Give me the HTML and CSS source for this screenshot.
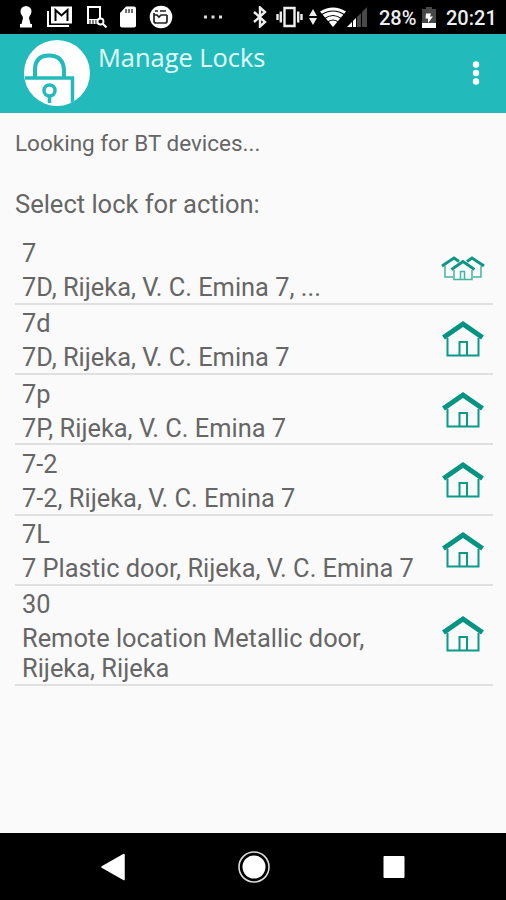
FILE: index.html
```html
<!DOCTYPE html>
<html lang="en">
<head>
<meta charset="utf-8">
<title>Manage Locks</title>
<link rel="stylesheet" href="styles.css">
</head>
<body>
<svg class="defs" width="0" height="0">
  <symbol id="house" viewBox="0 0 44 38">
    <path d="M6.500 18v17.500h31V18M18.500 35V22h7.500v13" fill="none" stroke="#0a9a88" stroke-width="2"/>
    <path d="M2.500 17.500 22 4l19.500 13.500" fill="none" stroke="#059482" stroke-width="5"/>
  </symbol>
  <symbol id="houses" viewBox="0 0 44 28">
    <g fill="none" stroke="#45b5a3" stroke-width="1.500">
      <path d="M4 11v11h8M40 11v11h-8M13 15v9.500h18V15M19.500 24v-7.500h4V24"/>
    </g>
    <g fill="none" stroke="#0c9684" stroke-width="2.800">
      <path d="m1 11 12-8 5 3.500M43 11 31 3l-5 3.500M10.500 14.500 22 6.500l11.500 8"/>
    </g>
  </symbol>
</svg>
<div class="phone">
  <header class="status">
    <div class="notifications">
      <svg width="16" height="24" viewBox="0 0 16 24" fill="#fff"><circle cx="8" cy="6.500" r="5.500"/><path d="M3.500 8h9l-1.500 5 1.500 6H14v3.500H2V19h1.500L5 13z"/></svg>
      <svg width="27" height="24" viewBox="0 0 27 24"><path d="M2 6v15h21" fill="none" stroke="#fff" stroke-width="2"/><path d="M5 1.500h21v17H5z" fill="#fff"/><path d="M9.500 16V5l6 5.500 6-5.500v11" fill="none" stroke="#000" stroke-width="2"/></svg>
      <svg width="21" height="24" viewBox="0 0 21 24" fill="none" stroke="#fff"><path d="M2 14V2h12v12" stroke-width="2"/><path d="M1 14h12v5H1z" fill="#fff" stroke="none"/><path d="M4 15v4M7 15v4M10 15v4" stroke="#000"/><circle cx="14.500" cy="16.500" r="3" fill="#000" stroke-width="1.800"/><path d="m16.500 18.500 4 4" stroke-width="2"/></svg>
      <svg width="18" height="24" viewBox="0 0 18 24"><path d="M7 1.500h8q2 0 2 2v17q0 2-2 2H3q-2 0-2-2V8z" fill="#fff"/><path d="M7 4v4M10 4v4M13 4v4" stroke="#444" stroke-width="1.500"/></svg>
      <svg width="24" height="24" viewBox="0 0 24 24"><circle cx="12" cy="12" r="11.300" fill="#fff"/><path d="M5 8v8q0 2 2 2h9q2 0 2-2V10M5 10h3l2 2 2-2h6M6 6h3m2 0h6" fill="none" stroke="#222" stroke-width="1.700"/></svg>
    </div>
    <svg class="more" width="19" height="4" viewBox="0 0 19 4" fill="#ddd"><path d="M0 .5h3v3H0zM7.500.5h3v3h-3zM15 .5h3v3h-3z"/></svg>
    <svg class="bt" width="14" height="22" viewBox="0 0 14 22"><path d="m1 6 11 10-5 4.500v-19L12 6 1 16" fill="none" stroke="#eee" stroke-width="2.400"/></svg>
    <svg class="vibrate" width="27" height="22" viewBox="0 0 27 22" fill="none" stroke="#eee" stroke-width="2.400"><path d="M8.500 2h10v18h-10z"/><path d="M1.500 8v6M4.800 5.500v11M22.200 5.500v11M25.500 8v6"/></svg>
    <svg class="arrows" width="8" height="18" viewBox="0 0 8 18" fill="#eee"><path d="m4 1 4 7H0zM4 17l4-7H0z"/></svg>
    <svg class="wifi" width="26" height="20" viewBox="0 0 26 20"><path d="M0 4.500Q13-3.500 26 4.500L13 20z" fill="#fff"/><path d="M1 8Q13 0 25 8M4 12Q13 5 22 12M7 15.500q6-5 12 0" fill="none" stroke="#000" stroke-width="1.200"/></svg>
    <svg class="signal" width="21" height="20" viewBox="0 0 21 20"><path d="M0 20 20 0v20z" fill="#494949"/><path d="M0 20 9 11v9z" fill="#fff"/><path d="M5.500 9v11M9.500 5v15M14.500 2v18" stroke="#000" stroke-width="1"/></svg>
    <span class="percent">28%</span>
    <svg class="battery" width="14" height="21" viewBox="0 0 14 21"><path d="M4 0h6v2h4v19H0V2h4z" fill="#484848"/><path d="M0 16h14v5H0z" fill="#fff"/><path d="M4 6.500h5l-1 3h3L6 16v-4.500H3.500z" fill="#fff"/></svg>
    <span class="clock">20:21</span>
  </header>
  <div class="appbar">
    <svg class="logo" width="68" height="68" viewBox="0 0 68 68">
      <defs><clipPath id="disc"><circle cx="34" cy="34" r="33"/></clipPath></defs>
      <circle cx="34" cy="34" r="33" fill="#fff"/>
      <g clip-path="url(#disc)" fill="none" stroke="#22baba">
        <path d="M12 38V31q0-14.500 14-14.500T41 31v7" stroke-width="4"/>
        <path d="M2 39h47.500v29" stroke-width="3.500"/>
        <circle cx="26.500" cy="51.500" r="5.500" stroke-width="3.500"/>
        <path d="M26.500 57v7" stroke-width="3.500"/>
      </g>
    </svg>
    <h1>Manage Locks</h1>
    <svg class="menu" width="10" height="26" viewBox="0 0 10 26" fill="#fff"><circle cx="5" cy="4.500" r="3.200"/><circle cx="5" cy="13" r="3.200"/><circle cx="5" cy="21.500" r="3.200"/></svg>
  </div>
  <main>
    <p class="looking">Looking for BT devices...</p>
    <p class="select">Select lock for action:</p>
    <ul>
      <li><div class="info"><span class="name">7</span><span class="place">7D, Rijeka, V. C. Emina 7, ...</span></div><svg class="houses"><use href="#houses"/></svg></li>
      <li><div class="info"><span class="name">7d</span><span class="place">7D, Rijeka, V. C. Emina 7</span></div><svg class="house"><use href="#house"/></svg></li>
      <li><div class="info"><span class="name">7p</span><span class="place">7P, Rijeka, V. C. Emina 7</span></div><svg class="house"><use href="#house"/></svg></li>
      <li><div class="info"><span class="name">7-2</span><span class="place">7-2, Rijeka, V. C. Emina 7</span></div><svg class="house"><use href="#house"/></svg></li>
      <li><div class="info"><span class="name">7L</span><span class="place">7 Plastic door, Rijeka, V. C. Emina 7</span></div><svg class="house"><use href="#house"/></svg></li>
      <li class="tall"><div class="info"><span class="name">30</span><span class="place">Remote location Metallic door,<br>Rijeka, Rijeka</span></div><svg class="house"><use href="#house"/></svg></li>
    </ul>
  </main>
  <nav>
    <svg width="26" height="28" viewBox="0 0 26 28"><path d="m2 14 22-12.500v25z" fill="#fff" stroke="#fff" stroke-width="1.500" stroke-linejoin="round"/></svg>
    <svg class="home" width="32" height="32" viewBox="0 0 32 32"><circle cx="16" cy="16" r="15" fill="none" stroke="#ddd" stroke-width="1.600"/><circle cx="16" cy="16" r="11.500" fill="#fff"/></svg>
    <svg width="22" height="24" viewBox="0 0 22 24"><rect x=".5" y="1" width="21" height="22" rx="1" fill="#fff"/></svg>
  </nav>
</div>
</body>
</html>
```
FILE: styles.css
```css
* { box-sizing: border-box; }
body { margin: 0; background: #fafafa; font-family: Roboto, sans-serif; color: #666; }
svg { display: block; flex: none; }
.defs { position: absolute; }
.phone { width: 506px; height: 900px; display: flex; flex-direction: column; overflow: hidden; }
.status { height: 34px; background: #000; display: flex; align-items: center; padding-left: 18px; color: #eee; font-size: 20px; font-weight: 500; white-space: nowrap; flex: none; }
.notifications { display: flex; align-items: center; width: 155px; justify-content: space-between; }
.more { margin-left: 31px; }
.bt { margin-left: 30px; }
.vibrate { margin-left: 9px; }
.arrows { margin-left: 6px; }
.wifi { margin-left: 3px; }
.signal { margin-left: 1px; }
.percent { width: 36px; margin-left: 11px; margin-top: 2px; }
.battery { margin-left: 7px; }
.clock { margin-left: 10px; margin-top: 2px; }
.appbar { height: 79px; background: #22baba; display: flex; padding: 5px 25px 0 23px; flex: none; }
.appbar h1 { margin: 1px 0 0 7px; font: 400 25.4px/34px "Open Sans", sans-serif; color: #e4ffff; flex: 1; white-space: nowrap; }
.menu { margin: 21px 0 0; }
main { flex: 1; padding: 0 13px 0 15px; }
p { margin: 0; }
.looking { padding-top: 15px; font-size: 22.5px; line-height: 30px; }
.select { padding-top: 30px; font-size: 25.5px; line-height: 32px; }
ul { list-style: none; margin: 14.4px 0 0; padding: 0; font-size: 25.4px; }
li { height: 70.3px; border-bottom: 2px solid #e0e0e0; padding-left: 7px; display: flex; justify-content: space-between; }
.tall { height: 100px; }
.info { display: flex; flex-direction: column; padding-top: 1.6px; white-space: nowrap; }
.name { line-height: 34px; }
.place { line-height: 29.5px; padding-top: 3px; }
.house { width: 44px; height: 38px; margin: 15.6px 8px 0 0; }
.houses { width: 44px; height: 28px; margin: 20.6px 8px 0 0; }
.tall .house { margin-top: 29.6px; }
nav { height: 67px; background: #000; display: flex; align-items: center; justify-content: space-between; padding: 0 101px 0 100px; flex: none; }
.home { margin-left: -2px; }
```
